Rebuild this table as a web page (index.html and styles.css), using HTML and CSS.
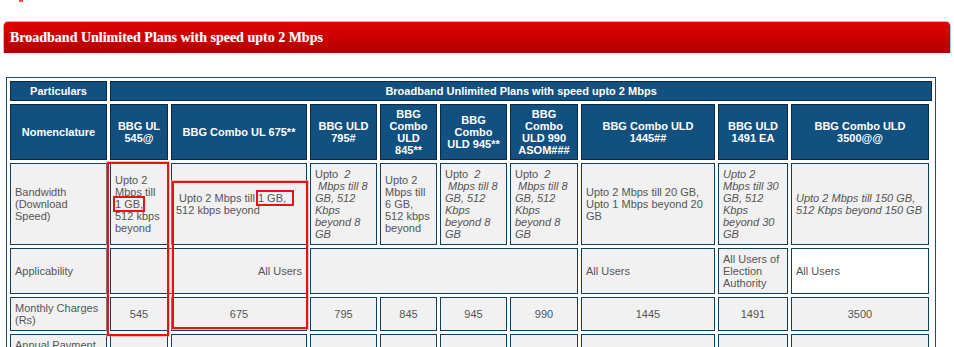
FILE: index.html
```html
<!DOCTYPE html>
<html>
<head>
<meta charset="utf-8">
<link rel="stylesheet" href="styles.css">
</head>
<body>
<div class="mark"></div>
<div class="titlebar">Broadband Unlimited Plans with speed upto 2 Mbps</div>
<table class="plans">
  <colgroup>
    <col class="c1"><col class="c2"><col class="c3"><col class="c4"><col class="c5"><col class="c6"><col class="c7"><col class="c8"><col class="c9"><col class="c10"><col class="c11">
  </colgroup>
  <tr>
    <th>Particulars</th>
    <th colspan="10">Broadband Unlimited Plans with speed upto 2 Mbps</th>
  </tr>
  <tr>
    <th>Nomenclature</th>
    <th>BBG UL 545@</th>
    <th>BBG Combo UL 675**</th>
    <th>BBG ULD 795#</th>
    <th>BBG Combo ULD 845**</th>
    <th>BBG Combo ULD 945**</th>
    <th>BBG Combo ULD 990 ASOM###</th>
    <th>BBG Combo ULD 1445##</th>
    <th>BBG ULD 1491 EA</th>
    <th>BBG Combo ULD 3500@@</th>
  </tr>
  <tr>
    <td>Bandwidth (Download Speed)</td>
    <td>Upto 2 Mbps till <span class="mark-gb">1 GB,</span> 512 kbps beyond</td>
    <td>&nbsp;Upto 2 Mbps till <span class="mark-gb">1 GB,&nbsp;&nbsp;</span> 512 kbps beyond</td>
    <td>Upto &nbsp;<i>2 &nbsp;Mbps till 8 GB, 512 Kbps beyond 8 GB</i></td>
    <td>Upto 2 Mbps till 6 GB, 512 kbps beyond</td>
    <td>Upto &nbsp;<i>2 &nbsp;Mbps till 8 GB, 512 Kbps beyond 8 GB</i></td>
    <td>Upto &nbsp;<i>2 &nbsp;Mbps till 8 GB, 512 Kbps beyond 8 GB</i></td>
    <td>Upto 2 Mbps till 20 GB, Upto 1 Mbps beyond 20 GB</td>
    <td><i>Upto 2 Mbps till 30 GB, 512 Kbps beyond 30 GB</i></td>
    <td><i>Upto 2 Mbps till 150 GB, 512 Kbps beyond 150 GB</i></td>
  </tr>
  <tr>
    <td>Applicability</td>
    <td colspan="2" class="right">All Users</td>
    <td colspan="4"></td>
    <td>All Users</td>
    <td>All Users of Election Authority</td>
    <td class="white">All Users</td>
  </tr>
  <tr>
    <td>Monthly Charges (Rs)</td>
    <td class="num">545</td>
    <td class="num">675</td>
    <td class="num">795</td>
    <td class="num">845</td>
    <td class="num">945</td>
    <td class="num">990</td>
    <td class="num">1445</td>
    <td class="num">1491</td>
    <td class="num">3500</td>
  </tr>
  <tr class="top">
    <td>Annual Payment Option (Rs)</td>
    <td></td><td></td><td></td><td></td><td></td><td></td><td></td><td></td><td></td>
  </tr>
</table>
<div class="box box-a"></div>
<div class="box box-b"></div>
</body>
</html>
```

FILE: styles.css
```css
html, body {
  margin: 0;
  padding: 0;
  background: #ffffff;
}

body {
  width: 954px;
  overflow: hidden;
}

.mark {
  width: 4px;
  height: 2px;
  margin-left: 19px;
  background: #f05050;
}

.titlebar {
  margin: 19px 3px 0 3px;
  height: 31px;
  border: 1px solid #93cde4;
  border-bottom: 0;
  border-radius: 5px 5px 0 0;
  background: linear-gradient(#e20000, #b30000);
  color: #ffffff;
  font: bold 14px/32px "Liberation Serif", "Times New Roman", serif;
  padding-left: 6px;
  text-shadow: 0 0 1px rgba(255, 255, 255, 0.4);
}

.plans {
  margin: 24px 0 0 6px;
  width: 930px;
  table-layout: fixed;
  border: 1px solid #1b4d70;
  border-spacing: 3px;
  font: 11px/12px "Liberation Sans", Arial, sans-serif;
  color: #555555;
}

.c1 { width: 97px; }
.c2 { width: 58px; }
.c3 { width: 136px; }
.c4 { width: 67px; }
.c5 { width: 57px; }
.c6 { width: 67px; }
.c7 { width: 68px; }
.c8 { width: 134px; }
.c9 { width: 70px; }
.c10 { width: 138px; }
.c11 { width: 0; }

.plans th {
  background: #11507f;
  border: 1px solid #0a2a45;
  color: #ffffff;
  font-weight: bold;
  padding: 3px 4px;
  text-align: center;
  vertical-align: middle;
}

.plans td {
  background: #f1f1f1;
  border: 1px solid #143e5f;
  padding: 4px 4px;
  text-align: left;
  vertical-align: middle;
}

.plans td.num {
  text-align: center;
}

.plans td.right {
  text-align: right;
}

.plans td.white {
  background: #ffffff;
}

.plans tr.top td {
  vertical-align: top;
}

.mark-gb {
  outline: 2px solid #e41414;
}

.box {
  position: absolute;
  border: 2px solid #e41414;
  box-shadow: 0 0 0 1px rgba(255, 140, 140, 0.55);
}

.box-a {
  left: 107px;
  top: 162px;
  width: 58px;
  height: 170px;
}

.box-b {
  left: 172px;
  top: 181px;
  width: 132px;
  height: 144px;
}
```
